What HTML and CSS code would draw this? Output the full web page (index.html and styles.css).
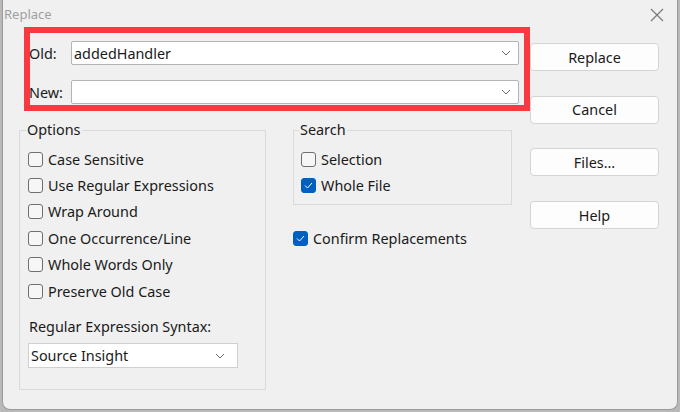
FILE: index.html
```html
<!DOCTYPE html>
<html>
<head>
<meta charset="utf-8">
<link rel="stylesheet" href="styles.css">
</head>
<body>
<div class="dialog">
  <div class="titlebar">
    <span class="title">Replace</span>
    <svg class="close" width="14" height="14" viewBox="0 0 14 14"><path d="M1 1L13 13M13 1L1 13" stroke="#7a7a7a" stroke-width="1.2" fill="none"/></svg>
  </div>
  <div class="main">
    <div class="left">
      <div class="highlight">
        <div class="field">
          <span class="flabel">Old:</span>
          <div class="combo"><span class="ctext">addedHandler</span><svg class="chev" width="10" height="6" viewBox="0 0 10 6"><path d="M1 1L5 5L9 1" stroke="#6a6a6a" stroke-width="1" fill="none"/></svg></div>
        </div>
        <div class="field">
          <span class="flabel">New:</span>
          <div class="combo"><span class="ctext"></span><svg class="chev" width="10" height="6" viewBox="0 0 10 6"><path d="M1 1L5 5L9 1" stroke="#6a6a6a" stroke-width="1" fill="none"/></svg></div>
        </div>
      </div>
      <div class="groups">
        <fieldset class="group options">
          <legend>Options</legend>
          <div class="row"><span class="cb"></span>Case Sensitive</div>
          <div class="row"><span class="cb"></span>Use Regular Expressions</div>
          <div class="row"><span class="cb"></span>Wrap Around</div>
          <div class="row"><span class="cb"></span>One Occurrence/Line</div>
          <div class="row"><span class="cb"></span>Whole Words Only</div>
          <div class="row"><span class="cb"></span>Preserve Old Case</div>
          <div class="syntax-label">Regular Expression Syntax:</div>
          <div class="select"><span>Source Insight</span><svg class="chev" width="10" height="6" viewBox="0 0 10 6"><path d="M1 1L5 5L9 1" stroke="#6a6a6a" stroke-width="1" fill="none"/></svg></div>
        </fieldset>
        <div class="rightgroups">
          <fieldset class="group search">
            <legend>Search</legend>
            <div class="row"><span class="cb"></span>Selection</div>
            <div class="row"><span class="cb checked"><svg width="9" height="7" viewBox="0 0 9 7"><path d="M1 3.5L3.5 6L8 1" stroke="#fff" stroke-width="1" fill="none"/></svg></span>Whole File</div>
          </fieldset>
          <div class="row confirm"><span class="cb checked"><svg width="9" height="7" viewBox="0 0 9 7"><path d="M1 3.5L3.5 6L8 1" stroke="#fff" stroke-width="1" fill="none"/></svg></span>Confirm Replacements</div>
        </div>
      </div>
    </div>
    <div class="buttons">
      <button class="btn">Replace</button>
      <button class="btn">Cancel</button>
      <button class="btn">Files...</button>
      <button class="btn">Help</button>
    </div>
  </div>
</div>
</body>
</html>
```
FILE: styles.css
```css
html, body {
  margin: 0;
  padding: 0;
  background: #b9b9b9;
}
body {
  width: 680px;
  height: 412px;
  overflow: hidden;
  font-family: "Noto Sans", "Liberation Sans", sans-serif;
  font-size: 14.4px;
  color: #1a1a1a;
}
.dialog {
  margin-left: 2px;
  width: 674px;
  height: 409px;
  background: #f0f0f0;
  border: 1px solid #9a9a9a;
  border-top: none;
  border-radius: 0 0 8px 8px;
  box-sizing: content-box;
}
.titlebar {
  height: 27px;
  display: flex;
  align-items: flex-start;
  justify-content: space-between;
}
.title {
  margin-left: 1px;
  margin-top: 5px;
  font-size: 13px;
  color: #a0a0a0;
}
.close {
  margin-top: 8px;
  margin-right: 13px;
}
.main {
  display: flex;
}
.left {
  margin-left: 16px;
  width: 511px;
}
.highlight {
  margin-left: 5px;
  width: 494px;
  height: 64px;
  border: 6px solid #f9393f;
  padding-top: 8px;
  box-sizing: content-box;
  display: flex;
  flex-direction: column;
  gap: 15px;
}
.field {
  display: flex;
  align-items: center;
  height: 24px;
}
.flabel {
  width: 42px;
  margin-left: -1px;
}
.combo {
  width: 448px;
  height: 24px;
  box-sizing: border-box;
  background: #fff;
  border: 1px solid #b4b4b4;
  border-radius: 2px;
  display: flex;
  align-items: center;
  justify-content: space-between;
  padding: 0 7px 0 2px;
}
.groups {
  display: flex;
  margin-top: 10px;
  gap: 27px;
}
.group {
  margin: 0;
  border: 1px solid #dadada;
  padding: 0;
}
.group legend {
  padding: 0 1px;
  margin-left: -2px;
  line-height: 18px;
}
.options {
  width: 247px;
  height: 269px;
  padding-left: 8px;
  padding-top: 7px;
  box-sizing: border-box;
}
.row {
  display: flex;
  align-items: center;
  height: 26.4px;
  white-space: nowrap;
}
.cb {
  width: 13px;
  height: 13px;
  border: 1px solid #6f6f6f;
  border-radius: 3px;
  margin-right: 5px;
  background: #f6f6f6;
  display: flex;
  align-items: center;
  justify-content: center;
  flex: none;
}
.cb.checked {
  background: #0060c0;
  border-color: #0060c0;
}
.syntax-label {
  margin-top: 13px;
  margin-left: 1px;
  line-height: 20px;
}
.select {
  margin-top: 6px;
  width: 210px;
  height: 25px;
  background: #fff;
  border: 1px solid #d0d0d0;
  display: flex;
  align-items: center;
  justify-content: space-between;
  padding: 0 12px 0 2px;
  box-sizing: border-box;
}
.rightgroups {
  display: flex;
  flex-direction: column;
}
.search {
  width: 219px;
  height: 84px;
  box-sizing: border-box;
  padding-left: 7px;
  padding-top: 7px;
}
.confirm {
  margin-top: 20px;
}
.buttons {
  margin-top: 16px;
  display: flex;
  flex-direction: column;
  gap: 24.7px;
}
.btn {
  width: 129px;
  height: 28px;
  background: #fdfdfd;
  border: 1px solid #d4d4d4;
  border-radius: 4px;
  font-family: inherit;
  font-size: 14.4px;
  color: #1a1a1a;
  padding: 0;
}
```
